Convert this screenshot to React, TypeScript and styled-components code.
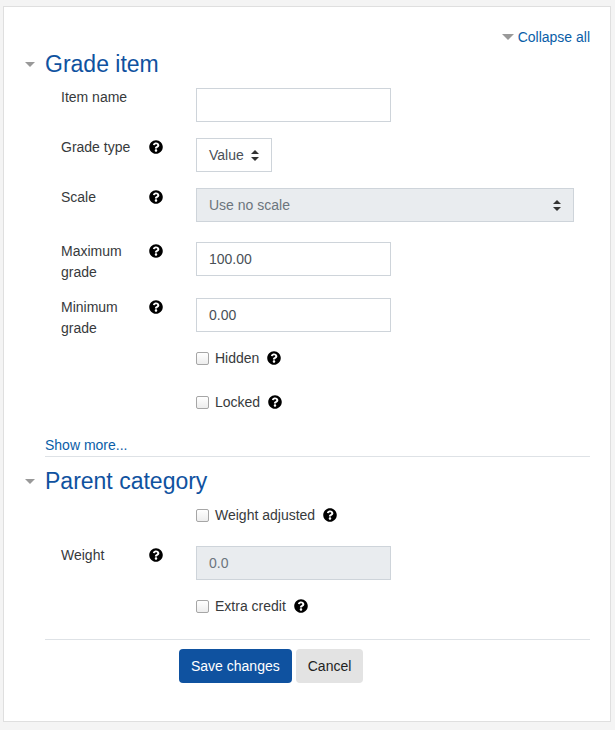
import styled, { createGlobalStyle } from "styled-components";
import { FaQuestionCircle } from "react-icons/fa";

const Global = createGlobalStyle`
  body {
    margin: 0;
    background: #f4f4f4;
    font-family: "Liberation Sans", Arial, sans-serif;
    font-size: 14px;
    color: #373a3c;
  }
`;

const Card = styled.div`
  margin: 6px 4px 0 3px;
  height: 716px;
  box-sizing: border-box;
  background: #fff;
  border: 1px solid #dfdfdf;
  padding: 21px 20px 0 21px;
`;

const TopBar = styled.div`
  display: flex;
  justify-content: flex-end;
  height: 17px;
`;

const Link = styled.a`
  color: #0a5ea8;
  text-decoration: none;
  display: inline-flex;
  align-items: center;
  gap: 4px;
`;

const Caret = styled.span`
  display: inline-block;
  width: 0;
  height: 0;
  border-left: ${(p: { size: number }) => p.size}px solid transparent;
  border-right: ${(p: { size: number }) => p.size}px solid transparent;
  border-top: ${(p: { size: number }) => p.size}px solid #999;
`;

const Legend = styled.h2`
  display: flex;
  align-items: center;
  gap: 10px;
  margin: 0;
  font-size: 23px;
  font-weight: 400;
  color: #0f52a0;
  height: 30px;
  margin-top: ${(p: { top: number }) => p.top}px;
`;

const Section = styled.div`
  padding-left: 20px;
`;

const Row = styled.div<{ mt: number }>`
  display: flex;
  align-items: flex-start;
  margin-top: ${(p) => p.mt}px;
`;

const Label = styled.div`
  width: 88px;
  padding-left: 16px;
  line-height: 21px;
  margin-top: -1px;
`;

const HelpSlot = styled.div`
  width: 47px;
  padding-top: 2px;
  font-size: 14px;
  color: #000;
`;

const Input = styled.div<{ disabled?: boolean; w?: number }>`
  box-sizing: border-box;
  width: ${(p) => p.w ?? 195}px;
  height: 34px;
  border: 1px solid #ced4da;
  background: ${(p) => (p.disabled ? "#e9ecef" : "#fff")};
  padding: 0 12px;
  display: flex;
  align-items: center;
  justify-content: space-between;
  color: ${(p) => (p.disabled ? "#6c757d" : "#495057")};
`;

const Updown = () => (
  <svg width="8" height="11" viewBox="0 0 8 11">
    <path d="M4 0L8 4H0z M4 11L0 7h8z" fill="#333" />
  </svg>
);

const Check = styled.div<{ mt: number }>`
  display: flex;
  align-items: center;
  gap: 6px;
  margin-left: 151px;
  margin-top: ${(p) => p.mt}px;
  height: 20px;
`;

const Box = styled.span`
  width: 11px;
  height: 11px;
  border: 1px solid #a6a6a6;
  border-radius: 2px;
  background: linear-gradient(#fff, #ededed);
`;

const Help = styled(FaQuestionCircle)`
  color: #000;
  margin-left: 2px;
`;

const ShowMore = styled.div`
  margin-top: 25px;
  padding-bottom: 3px;
  border-bottom: 1px solid #dee2e6;
`;

const Actions = styled.div`
  margin-top: 23px;
  border-top: 1px solid #dee2e6;
  padding-top: 9px;
  padding-left: 134px;
  display: flex;
  gap: 4px;
`;

const Button = styled.button<{ primary?: boolean }>`
  font-family: inherit;
  font-size: 14px;
  height: 34px;
  padding: 0 12px;
  border: none;
  border-radius: 4px;
  background: ${(p) => (p.primary ? "#0f52a0" : "#e3e3e3")};
  color: ${(p) => (p.primary ? "#fff" : "#222")};
`;

function Field(props: { mt: number; label: React.ReactNode; help?: boolean; children: React.ReactNode }) {
  return (
    <Row mt={props.mt}>
      <Label>{props.label}</Label>
      <HelpSlot>{props.help && <FaQuestionCircle />}</HelpSlot>
      {props.children}
    </Row>
  );
}

export default function App() {
  return (
    <>
      <Global />
      <Card>
        <TopBar>
          <Link href="#">
            <Caret size={6} />
            Collapse all
          </Link>
        </TopBar>
        <Legend top={4}>
          <Caret size={5} />
          Grade item
        </Legend>
        <Section>
          <Field mt={9} label="Item name">
            <Input />
          </Field>
          <Field mt={16} label="Grade type" help>
            <Input w={76}>
              Value <Updown />
            </Input>
          </Field>
          <Field mt={16} label="Scale" help>
            <Input w={378} disabled>
              Use no scale <Updown />
            </Input>
          </Field>
          <Field mt={20} label={<>Maximum<br />grade</>} help>
            <Input>100.00</Input>
          </Field>
          <Field mt={15} label={<>Minimum<br />grade</>} help>
            <Input>0.00</Input>
          </Field>
          <Check mt={9}>
            <Box />Hidden<Help />
          </Check>
          <Check mt={24}>
            <Box />Locked<Help />
          </Check>
          <ShowMore>
            <Link href="#">Show more...</Link>
          </ShowMore>
        </Section>
        <Legend top={9}>
          <Caret size={5} />
          Parent category
        </Legend>
        <Section>
          <Check mt={9}>
            <Box />Weight adjusted<Help />
          </Check>
          <Field mt={21} label="Weight" help>
            <Input disabled>0.0</Input>
          </Field>
          <Check mt={16}>
            <Box />Extra credit<Help />
          </Check>
          <Actions>
            <Button primary>Save changes</Button>
            <Button>Cancel</Button>
          </Actions>
        </Section>
      </Card>
    </>
  );
}
